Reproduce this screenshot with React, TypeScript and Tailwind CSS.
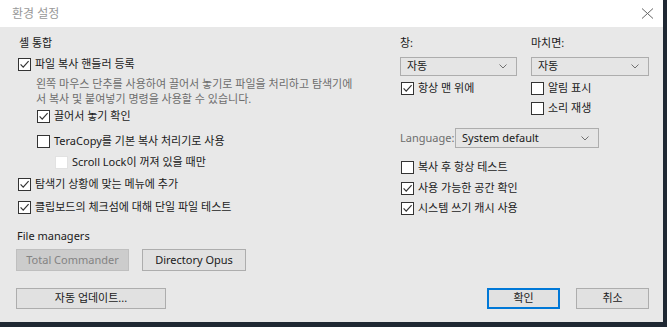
import React from "react";

function CheckBox({ checked, disabled }: { checked?: boolean; disabled?: boolean }) {
  return (
    <span
      className={`flex h-[13px] w-[13px] shrink-0 items-center justify-center border bg-white ${
        disabled ? "border-[#e2e2e2]" : "border-[#333333]"
      }`}
    >
      {checked && (
        <svg width="11" height="11" viewBox="0 0 11 11">
          <path d="M1.6 5.4 L4.2 8.1 L9.6 2.2" fill="none" stroke="#333333" strokeWidth="1.2" />
        </svg>
      )}
    </span>
  );
}

function Check({
  label,
  checked,
  disabled,
  className = "",
}: {
  label: string;
  checked?: boolean;
  disabled?: boolean;
  className?: string;
}) {
  return (
    <div className={`flex h-[16px] items-center gap-[4px] leading-[16px] ${className}`}>
      <CheckBox checked={checked} disabled={disabled} />
      <span className="whitespace-nowrap text-[#1a1a1a]">{label}</span>
    </div>
  );
}

function Select({ value, className = "" }: { value: string; className?: string }) {
  return (
    <div
      className={`flex items-center justify-between border border-[#adadad] bg-[#e5e5e5] pl-[6px] pr-[9px] ${className}`}
    >
      <span className="whitespace-nowrap text-[#1a1a1a]">{value}</span>
      <svg width="8" height="5" viewBox="0 0 8 5">
        <path d="M0.5 0.5 L4 4 L7.5 0.5" fill="none" stroke="#707070" strokeWidth="1" />
      </svg>
    </div>
  );
}

export default function App() {
  return (
    <div className="h-[327px] w-[667px] overflow-hidden bg-[#1f2833] font-['Noto_Sans','Noto_Sans_CJK_KR',sans-serif] text-[11px]">
      <div className="flex h-[322px] w-[663px] flex-col bg-white">
        {/* Title bar */}
        <div className="flex h-[27px] shrink-0 items-center justify-between pl-[12px] pr-[8px]">
          <span className="text-[12px] text-[#999999]">환경 설정</span>
          <svg width="13" height="11" viewBox="0 0 13 11" className="mr-[1px]">
            <path d="M1 0.5 L12 10.5 M12 0.5 L1 10.5" stroke="#666666" strokeWidth="1" />
          </svg>
        </div>

        {/* Body */}
        <div className="flex flex-1 flex-col bg-[#e8e8e8] pl-[16px] pr-[14px] pb-[13px]">
          <div className="flex">
            {/* Left column */}
            <div className="flex w-[384px] flex-col">
              <div className="ml-[3px] mt-[8px] h-[16px] leading-[16px] text-[#1a1a1a]">셸 통합</div>
              <Check className="ml-[2px] mt-[5px]" checked label="파일 복사 핸들러 등록" />
              <div className="ml-[20px] mt-[4px] leading-[15px] text-[#6d6d6d]">
                <div className="whitespace-nowrap">왼쪽 마우스 단추를 사용하여 끌어서 놓기로 파일을 처리하고 탐색기에</div>
                <div className="whitespace-nowrap">서 복사 및 붙여넣기 명령을 사용할 수 있습니다.</div>
              </div>
              <Check className="ml-[21px] mt-[2px]" checked label="끌어서 놓기 확인" />
              <Check className="ml-[21px] mt-[9px]" label="TeraCopy를 기본 복사 처리기로 사용" />
              <Check className="ml-[39px] mt-[5px]" disabled label="Scroll Lock이 꺼져 있을 때만" />
              <Check className="ml-[2px] mt-[6px]" checked label="탐색기 상황에 맞는 메뉴에 추가" />
              <Check className="ml-[2px] mt-[7px]" checked label="클립보드의 체크섬에 대해 단일 파일 테스트" />

              <div className="ml-[1px] mt-[13px] h-[16px] leading-[16px] text-[#1a1a1a]">File managers</div>
              <div className="mt-[5px] flex gap-[13px]">
                <div className="flex h-[22px] w-[113px] items-center justify-center border border-[#bfbfbf] bg-[#cccccc] text-[#838383]">
                  Total Commander
                </div>
                <div className="flex h-[22px] w-[104px] items-center justify-center border border-[#adadad] bg-[#e1e1e1] text-[#1a1a1a]">
                  Directory Opus
                </div>
              </div>
            </div>

            {/* Right column */}
            <div className="flex flex-1 flex-col">
              <div className="flex gap-[14px]">
                <div className="flex w-[117px] flex-col">
                  <div className="mt-[8px] h-[16px] leading-[16px] text-[#1a1a1a]">창:</div>
                  <Select className="mt-[6px] h-[19px]" value="자동" />
                  <Check className="ml-[1px] mt-[4px]" checked label="항상 맨 위에" />
                </div>
                <div className="flex w-[118px] flex-col">
                  <div className="mt-[8px] h-[16px] leading-[16px] text-[#1a1a1a]">마치면:</div>
                  <Select className="mt-[6px] h-[19px]" value="자동" />
                  <Check className="mt-[4px]" label="알림 표시" />
                  <Check className="mt-[4px]" label="소리 재생" />
                </div>
              </div>

              <div className="mt-[12px] flex items-center">
                <span className="w-[55px] text-[#6d6d6d]">Language:</span>
                <Select className="h-[20px] w-[144px]" value="System default" />
              </div>

              <Check className="ml-[1px] mt-[11px]" label="복사 후 항상 테스트" />
              <Check className="ml-[1px] mt-[5px]" checked label="사용 가능한 공간 확인" />
              <Check className="ml-[1px] mt-[4px]" checked label="시스템 쓰기 캐시 사용" />
            </div>
          </div>

          {/* Bottom buttons */}
          <div className="mt-auto flex items-center">
            <div className="flex h-[21px] w-[150px] items-center justify-center border border-[#adadad] bg-[#e1e1e1] text-[#1a1a1a]">
              자동 업데이트...
            </div>
            <div className="ml-auto flex h-[21px] w-[73px] items-center justify-center border-2 border-[#0078d7] bg-[#e1e1e1] text-[#1a1a1a]">
              확인
            </div>
            <div className="ml-[16px] flex h-[21px] w-[73px] items-center justify-center border border-[#adadad] bg-[#e1e1e1] text-[#1a1a1a]">
              취소
            </div>
          </div>
        </div>
      </div>
    </div>
  );
}
